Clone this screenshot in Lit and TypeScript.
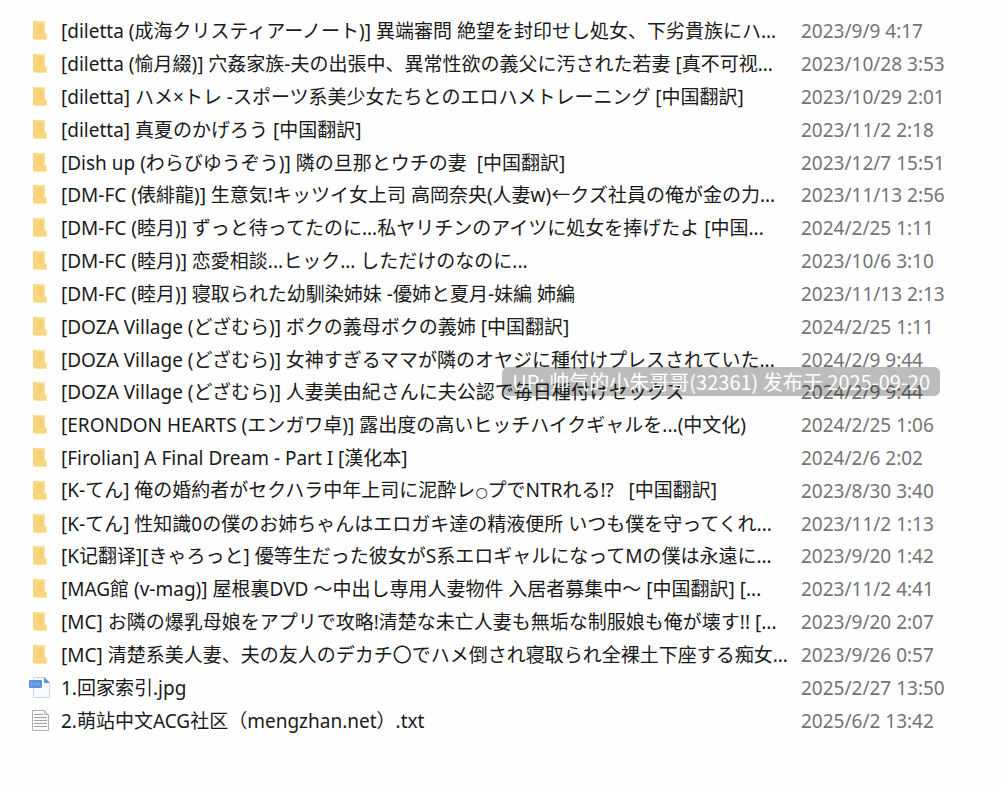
import { LitElement, html, css, svg } from "lit";
import { customElement, property } from "lit/decorators.js";

type Kind = "folder" | "image" | "text";
interface Entry {
  name: string;
  date: string;
  kind?: Kind;
}

const ENTRIES: Entry[] = [
  { name: "[diletta (成海クリスティアーノート)] 異端審問 絶望を封印せし処女、下劣貴族にハ...", date: "2023/9/9 4:17" },
  { name: "[diletta (愉月綴)] 穴姦家族-夫の出張中、異常性欲の義父に汚された若妻 [真不可视...", date: "2023/10/28 3:53" },
  { name: "[diletta] ハメ×トレ -スポーツ系美少女たちとのエロハメトレーニング [中国翻訳]", date: "2023/10/29 2:01" },
  { name: "[diletta] 真夏のかげろう [中国翻訳]", date: "2023/11/2 2:18" },
  { name: "[Dish up (わらびゆうぞう)] 隣の旦那とウチの妻  [中国翻訳]", date: "2023/12/7 15:51" },
  { name: "[DM-FC (俵緋龍)] 生意気!キッツイ女上司 高岡奈央(人妻w)←クズ社員の俺が金の力...", date: "2023/11/13 2:56" },
  { name: "[DM-FC (睦月)] ずっと待ってたのに...私ヤリチンのアイツに処女を捧げたよ [中国...", date: "2024/2/25 1:11" },
  { name: "[DM-FC (睦月)] 恋愛相談...ヒック... しただけのなのに...", date: "2023/10/6 3:10" },
  { name: "[DM-FC (睦月)] 寝取られた幼馴染姉妹 -優姉と夏月-妹編 姉編", date: "2023/11/13 2:13" },
  { name: "[DOZA Village (どざむら)] ボクの義母ボクの義姉 [中国翻訳]", date: "2024/2/25 1:11" },
  { name: "[DOZA Village (どざむら)] 女神すぎるママが隣のオヤジに種付けプレスされていた...", date: "2024/2/9 9:44" },
  { name: "[DOZA Village (どざむら)] 人妻美由紀さんに夫公認で毎日種付けセックス", date: "2024/2/9 9:44" },
  { name: "[ERONDON HEARTS (エンガワ卓)] 露出度の高いヒッチハイクギャルを...(中文化)", date: "2024/2/25 1:06" },
  { name: "[Firolian] A Final Dream - Part I [漢化本]", date: "2024/2/6 2:02" },
  { name: "[K-てん] 俺の婚約者がセクハラ中年上司に泥酔レ○プでNTRれる!?   [中国翻訳]", date: "2023/8/30 3:40" },
  { name: "[K-てん] 性知識0の僕のお姉ちゃんはエロガキ達の精液便所 いつも僕を守ってくれ...", date: "2023/11/2 1:13" },
  { name: "[K记翻译][きゃろっと] 優等生だった彼女がS系エロギャルになってMの僕は永遠に...", date: "2023/9/20 1:42" },
  { name: "[MAG館 (v-mag)] 屋根裏DVD ～中出し専用人妻物件 入居者募集中～ [中国翻訳] [...", date: "2023/11/2 4:41" },
  { name: "[MC] お隣の爆乳母娘をアプリで攻略!清楚な未亡人妻も無垢な制服娘も俺が壊す!! [...", date: "2023/9/20 2:07" },
  { name: "[MC] 清楚系美人妻、夫の友人のデカチ〇でハメ倒され寝取られ全裸土下座する痴女...", date: "2023/9/26 0:57" },
  { name: "1.回家索引.jpg", date: "2025/2/27 13:50", kind: "image" },
  { name: "2.萌站中文ACG社区（mengzhan.net）.txt", date: "2025/6/2 13:42", kind: "text" },
];

const ICONS = {
  folder: svg`
    <path d="M4 2h12v12l1.500 1v5.500H4z" fill="#fbe09a"/>
    <path d="M4 2l5 1.500v17.500l-5-2z" fill="#f8d680"/>
    <path d="M9 4h5.500v11H9z" fill="#f7d074"/>
    <path d="M9 17l5-3 3.500 1v5.500H9z" fill="#f9d67e"/>`,
  image: svg`
    <path d="M4.500 1.500h11l5 5v15h-16z" fill="#f8fbff" stroke="#c3d7ef"/>
    <path d="M15 1v6h6z" fill="#5f92da"/>
    <rect x="0" y="4" width="13" height="8" rx="1" fill="#5f92e0"/>
    <path d="M2.500 6.500v3M5 6.500v3M7 7h1.500v1H7M10.500 7v2" stroke="#8fb6ef" fill="none"/>`,
  text: svg`
    <path d="M3.500 1.500h12l4 4v16h-16z" fill="#fafafa" stroke="#b0b0b0"/>
    <path d="M15.500 1.500v4h4" fill="#e6e6e6" stroke="#b0b0b0"/>
    <path d="M5 5.500h9M5 8.500h13M5 11.500h13M5 14.500h13M5 17.500h13" stroke="#a0a0a0"/>`,
};

@customElement("file-icon")
class FileIcon extends LitElement {
  @property() kind: Kind = "folder";

  static styles = css`
    :host {
      display: block;
      width: 22px;
      height: 24px;
    }
    svg {
      display: block;
    }
  `;

  render() {
    return html`<svg width="22" height="24" viewBox="0 0 22 24" aria-hidden="true">${ICONS[this.kind]}</svg>`;
  }
}

@customElement("app-root")
class AppRoot extends LitElement {
  static styles = css`
    :host {
      display: block;
      position: relative;
      min-height: 100vh;
      box-sizing: border-box;
      padding: 15px 0 48px 29px;
      background: #fefefe;
      color: #1a1a1a;
      font-family: "Noto Sans", "Noto Sans CJK SC", sans-serif;
      font-size: 19px;
    }
    .files {
      width: 100%;
      height: calc(100vh - 66px);
      table-layout: fixed;
      border-collapse: collapse;
    }
    .date-col {
      width: 203px;
    }
    td {
      height: 32px;
      padding: 0;
      line-height: 32px;
      text-align: left;
      vertical-align: middle;
      white-space: pre;
    }
    .entry {
      display: flex;
      align-items: center;
      gap: 10px;
      height: 32px;
    }
    .ring {
      font-family: "DejaVu Sans", sans-serif;
      font-size: 14px;
    }
    .date {
      color: #747474;
    }
    .credit {
      position: absolute;
      top: 367px;
      right: 64px;
      padding: 0 10px;
      border-radius: 6px;
      background: rgba(0, 0, 0, 0.26);
      color: #ffffff;
      font-family: "Noto Sans CJK SC", sans-serif;
      font-size: 20px;
      line-height: 29px;
      white-space: nowrap;
    }
  `;

  private renderName(name: string) {
    return name.split(/(○)/).map((run, i) => (i % 2 ? html`<span class="ring">${run}</span>` : run));
  }

  render() {
    return html`
      <table class="files">
        <colgroup>
          <col />
          <col class="date-col" />
        </colgroup>
        <tbody>
          ${ENTRIES.map(
            (e) => html`<tr>
              <td><div class="entry"><file-icon .kind=${e.kind ?? "folder"}></file-icon><span class="name">${this.renderName(e.name)}</span></div></td>
              <td class="date">${e.date}</td>
            </tr>`,
          )}
        </tbody>
      </table>
      <div class="credit">UP: 帅气的小朱哥哥(32361) 发布于 2025-09-20</div>
    `;
  }
}
